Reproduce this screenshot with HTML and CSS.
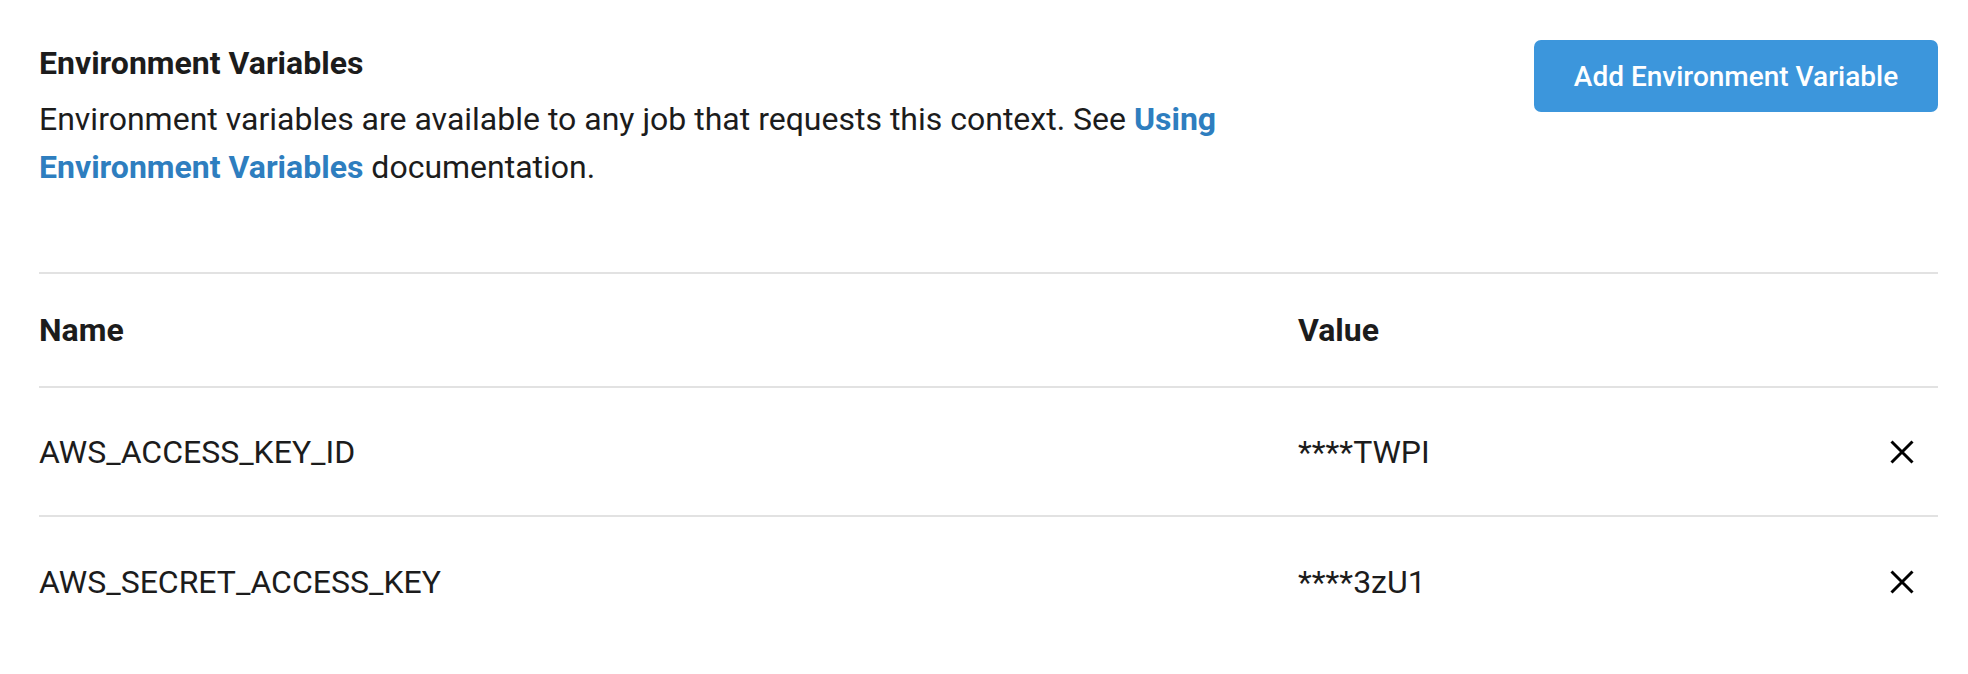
FILE: index.html
```html
<!DOCTYPE html>
<html lang="en">
<head>
<meta charset="utf-8">
<title>Environment Variables</title>
<link rel="stylesheet" href="styles.css">
</head>
<body>
<main class="panel">
  <section class="intro">
    <div class="intro-text">
      <h2 class="title">Environment Variables</h2>
      <p class="desc">Environment variables are available to any job that requests this context. See <a class="link" href="#">Using Environment Variables</a> documentation.</p>
    </div>
    <button class="add-btn" type="button">Add Environment Variable</button>
  </section>
  <div class="table">
    <div class="row head">
      <div class="cell">Name</div>
      <div class="cell">Value</div>
      <div class="cell"></div>
    </div>
    <div class="row">
      <div class="cell">AWS_ACCESS_KEY_ID</div>
      <div class="cell">****TWPI</div>
      <div class="cell"><button class="del" type="button" aria-label="Remove"><svg viewBox="0 0 24 24" width="24" height="24"><path d="M1.5 1.5 L22.5 22.5 M22.5 1.5 L1.5 22.5" stroke="#000" stroke-width="3" fill="none"/></svg></button></div>
    </div>
    <div class="row">
      <div class="cell">AWS_SECRET_ACCESS_KEY</div>
      <div class="cell">****3zU1</div>
      <div class="cell"><button class="del" type="button" aria-label="Remove"><svg viewBox="0 0 24 24" width="24" height="24"><path d="M1.5 1.5 L22.5 22.5 M22.5 1.5 L1.5 22.5" stroke="#000" stroke-width="3" fill="none"/></svg></button></div>
    </div>
  </div>
</main>
</body>
</html>
```
FILE: styles.css
```css
* { box-sizing: border-box; }
html, body { margin: 0; padding: 0; background: #fff; }
body {
  font-family: Roboto, "Liberation Sans", sans-serif;
  color: #1c1c1c;
}
.panel {
  padding: 40px 30px 0 39px;
}
.intro {
  display: flex;
  justify-content: space-between;
  align-items: flex-start;
}
.intro-text {
  max-width: 1240px;
  padding-top: 5px;
}
.title {
  margin: 0;
  font-size: 32px;
  font-weight: 700;
  line-height: 36px;
}
.desc {
  margin: 14px 0 0;
  font-size: 32px;
  line-height: 48px;
  font-weight: 400;
}
.link {
  color: #2e7ebf;
  font-weight: 700;
  text-decoration: none;
}
.add-btn {
  width: 404px;
  height: 72px;
  border: 0;
  border-radius: 7px;
  background: #3c96dc;
  color: #fff;
  font-family: Roboto, "Liberation Sans", sans-serif;
  font-size: 28px;
  font-weight: 500;
  padding: 0;
}
.table {
  margin-top: 81px;
  border-top: 2px solid #e2e2e2;
}
.row {
  display: grid;
  grid-template-columns: 1259px 1fr 48px;
  align-items: center;
  height: 129px;
  border-bottom: 2px solid #e2e2e2;
  font-size: 32px;
}
.row:last-child { border-bottom: 0; }
.row.head {
  height: 114px;
  font-weight: 700;
}
.cell:last-child {
  display: flex;
  justify-content: flex-end;
}
.del {
  border: 0;
  background: none;
  padding: 0;
  margin-right: 24px;
  width: 24px;
  height: 24px;
  display: block;
  cursor: pointer;
}
.del svg { display: block; }
```
